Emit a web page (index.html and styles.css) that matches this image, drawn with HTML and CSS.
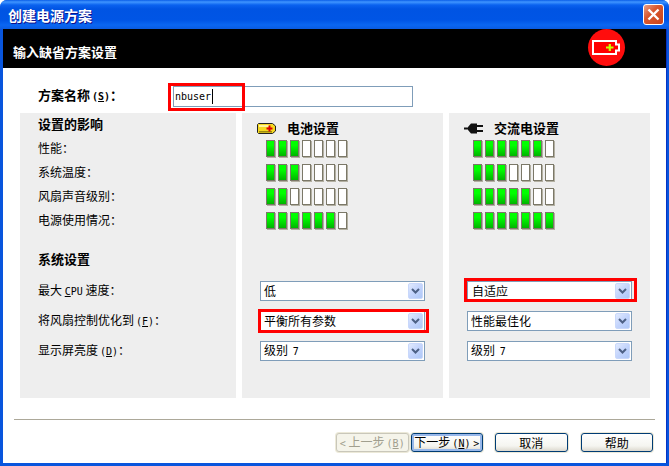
FILE: index.html
```html
<!DOCTYPE html>
<html lang="zh-CN">
<head>
<meta charset="utf-8">
<title>创建电源方案</title>
<link rel="stylesheet" href="styles.css">
</head>
<body>
<div class="window">
  <div class="titlebar">
    <span class="title">创建电源方案</span>
    <div class="close"><svg width="13" height="13" viewBox="0 0 13 13"><path d="M1.5 1.5L11.5 11.5M11.5 1.5L1.5 11.5" stroke="#fff" stroke-width="2.4" fill="none"/></svg></div>
  </div>
  <div class="client">
    <div class="banner">
      <span class="banner-text">输入缺省方案设置</span>
      <div class="badge">
        <svg width="29" height="17" viewBox="0 0 29 17">
          <path d="M1 2H24V5.5H27V11.5H24V15H1Z" fill="#ff0000" stroke="#fff" stroke-width="2"/>
          <path d="M14 8.5H21.5M17.8 5V12" stroke="#c8ff00" stroke-width="2.2" fill="none"/>
        </svg>
      </div>
    </div>
    <div class="name-row">
      <span class="name-label">方案名称<span class="lat mn">(<u>S</u>)</span><span class="colon">：</span></span>
      <div class="input"><span class="lat">nbuser</span><i class="caret"></i><b class="hl hl-input"></b></div>
    </div>
    <div class="panels">
      <section class="panel panel-labels">
        <h3 class="impact-title">设置的影响</h3>
        <div class="row-m">性能<span class="colon">：</span></div>
        <div class="row-m">系统温度<span class="colon">：</span></div>
        <div class="row-m">风扇声音级别<span class="colon">：</span></div>
        <div class="row-m">电源使用情况<span class="colon">：</span></div>
        <h3 class="system-title">系统设置</h3>
        <div class="row-s">最大 <span class="lat"><u>C</u>PU</span> 速度<span class="colon">：</span></div>
        <div class="row-s">将风扇控制优化到<span class="lat mn">(<u>F</u>)</span><span class="colon">：</span></div>
        <div class="row-s">显示屏亮度<span class="lat mn">(<u>D</u>)</span><span class="colon">：</span></div>
      </section>
      <section class="panel panel-col">
        <div class="col-head">
          <svg class="col-icon" width="20" height="11" viewBox="0 0 20 11">
            <path d="M1.5 .5H15.5L18.5 3V8L15.5 10.5H1.5L.5 9.5V1.5Z" fill="#f5d820" stroke="#222"/>
            <path d="M2 2H12V4H2Z" fill="#fff59a"/>
            <path d="M2 8H15V9.500H2Z" fill="#9a8a10"/>
            <path d="M9.500 5.500H15.500M12.500 2.500V8.500" stroke="#e00000" stroke-width="2" fill="none"/>
          </svg>
          <span>电池设置</span>
        </div>
        <div class="meter"><i class="on"></i><i class="on"></i><i class="on"></i><i></i><i></i><i></i><i></i></div>
        <div class="meter"><i class="on"></i><i class="on"></i><i class="on"></i><i></i><i></i><i></i><i></i></div>
        <div class="meter"><i class="on"></i><i class="on"></i><i></i><i></i><i></i><i></i><i></i></div>
        <div class="meter"><i class="on"></i><i class="on"></i><i class="on"></i><i class="on"></i><i class="on"></i><i class="on"></i><i></i></div>
        <div class="col-gap"></div>
        <div class="row-s"><div class="select"><span>低</span><span class="arrow"><svg width="9" height="6" viewBox="0 0 9 6"><path d="M1 1L4.500 4.500L8 1" stroke="#4d6185" stroke-width="2" fill="none"/></svg></span></div></div>
        <div class="row-s"><div class="select"><span>平衡所有参数</span><span class="arrow"><svg width="9" height="6" viewBox="0 0 9 6"><path d="M1 1L4.500 4.500L8 1" stroke="#4d6185" stroke-width="2" fill="none"/></svg></span><b class="hl hl-mid"></b></div></div>
        <div class="row-s"><div class="select"><span>级别 <span class="lat mn">7</span></span><span class="arrow"><svg width="9" height="6" viewBox="0 0 9 6"><path d="M1 1L4.500 4.500L8 1" stroke="#4d6185" stroke-width="2" fill="none"/></svg></span></div></div>
      </section>
      <section class="panel panel-col">
        <div class="col-head">
          <svg class="col-icon" width="20" height="11" viewBox="0 0 20 11">
            <path d="M0 5.500H6" stroke="#111" stroke-width="2"/>
            <path d="M4 4L7 .5H13V10.500H7L4 7Z" fill="#111"/>
            <path d="M12 3H19M12 8H19" stroke="#111" stroke-width="2"/>
          </svg>
          <span>交流电设置</span>
        </div>
        <div class="meter"><i class="on"></i><i class="on"></i><i class="on"></i><i class="on"></i><i class="on"></i><i class="on"></i><i></i></div>
        <div class="meter"><i class="on"></i><i class="on"></i><i class="on"></i><i></i><i></i><i></i><i></i></div>
        <div class="meter"><i class="on"></i><i class="on"></i><i class="on"></i><i class="on"></i><i class="on"></i><i></i><i></i></div>
        <div class="meter"><i class="on"></i><i class="on"></i><i class="on"></i><i class="on"></i><i class="on"></i><i class="on"></i><i class="on"></i></div>
        <div class="col-gap"></div>
        <div class="row-s"><div class="select"><span class="indent">自适应</span><span class="arrow"><svg width="9" height="6" viewBox="0 0 9 6"><path d="M1 1L4.500 4.500L8 1" stroke="#4d6185" stroke-width="2" fill="none"/></svg></span><b class="hl hl-right"></b></div></div>
        <div class="row-s"><div class="select"><span>性能最佳化</span><span class="arrow"><svg width="9" height="6" viewBox="0 0 9 6"><path d="M1 1L4.500 4.500L8 1" stroke="#4d6185" stroke-width="2" fill="none"/></svg></span></div></div>
        <div class="row-s"><div class="select"><span>级别 <span class="lat mn">7</span></span><span class="arrow"><svg width="9" height="6" viewBox="0 0 9 6"><path d="M1 1L4.500 4.500L8 1" stroke="#4d6185" stroke-width="2" fill="none"/></svg></span></div></div>
      </section>
    </div>
    <hr class="divider">
    <div class="footer">
      <div class="btn btn-disabled"><span><span class="lat">&lt;</span> 上一步<span class="lat mn">(<u>B</u>)</span></span></div>
      <div class="btn btn-default"><span>下一步<span class="lat mn">(<u>N</u>)</span> <span class="lat">&gt;</span></span></div>
      <div class="btn btn-cancel">取消</div>
      <div class="btn">帮助</div>
    </div>
  </div>
</div>
</body>
</html>
```
FILE: styles.css
```css
* { box-sizing: border-box; }
html, body { margin: 0; padding: 0; background: #fff; }
body { width: 669px; height: 466px; overflow: hidden; font-family: "Noto Sans CJK SC", "Liberation Sans", sans-serif; font-size: 12px; color: #000; }
.lat { font-family: "DejaVu Sans Mono", "Liberation Mono", monospace; font-size: 10px; }
.mn { margin-left: 2px; }
.colon { font-family: "Noto Sans CJK TC", "Noto Sans CJK SC", sans-serif; }
.window { width: 669px; height: 466px; display: flex; flex-direction: column; background: #0855dd; border-radius: 7px 7px 0 0; overflow: hidden; }
.titlebar { height: 29px; flex: none; display: flex; align-items: center; justify-content: space-between; padding: 0 5px 0 8px; background: linear-gradient(180deg, #0a5ee8 0, #3f95ff 2px, #0a62ef 5px, #0054e3 9px, #0055e5 20px, #0a66f2 25px, #0a5be0 29px); }
.title { color: #fff; font-size: 14px; font-weight: 700; line-height: 20px; text-shadow: 1px 1px 0 #0f1089; }
.close { width: 21px; height: 21px; display: flex; align-items: center; justify-content: center; border: 1px solid #fff; border-radius: 3px; background: linear-gradient(135deg, #e9a088 0, #d9582f 40%, #c8421a 100%); }
.client { flex: 1; margin: 0 3px 3px; background: #fff; display: flex; flex-direction: column; box-shadow: 1px 0 0 #0732c4; }
.banner { height: 39px; flex: none; background: #000; display: flex; align-items: flex-start; justify-content: space-between; padding: 0 41px 0 10px; }
.banner-text { color: #fff; font-size: 13px; font-weight: 700; line-height: 18px; margin-top: 14px; }
.badge { width: 37px; height: 37px; border-radius: 50%; background: #ff0d0d; display: flex; align-items: center; justify-content: center; }
.name-row { height: 45px; flex: none; display: flex; padding: 18px 0 0 35px; }
.name-label { width: 135px; font-size: 13px; font-weight: 700; line-height: 18px; }
.input { position: relative; width: 240px; height: 21px; border: 1px solid #7f9db9; background: #fff; display: flex; align-items: center; padding-left: 1px; }
.input .lat { font-size: 10px; }
.caret { display: block; width: 1px; height: 15px; background: #000; margin-left: 1px; }
.hl { position: absolute; border: 3px solid #ff0000; pointer-events: none; }
.hl-input { left: -6px; top: -4px; width: 77px; height: 28px; }
.hl-mid { left: -3px; top: -3px; right: -5px; bottom: -3px; }
.hl-right { left: -4px; top: -4px; right: -6px; bottom: -2px; }
.panels { flex: none; height: 285px; display: flex; gap: 6px; padding-left: 17px; }
.panel { background: #eeeeee; display: flex; flex-direction: column; }
.panel-labels { width: 216px; padding-left: 18px; }
.panel-col { width: 201px; }
.impact-title { margin: 0; height: 24px; font-size: 13px; font-weight: 700; line-height: 22px; }
.system-title { margin: 0; height: 45px; padding-top: 17px; font-size: 13px; font-weight: 700; line-height: 18px; }
.row-m { height: 24px; line-height: 22px; }
.row-s { height: 30px; padding-top: 3px; line-height: 18px; }
.panel-col .row-s { padding-left: 18px; }
.col-head { height: 24px; display: flex; align-items: center; padding: 4px 0 0 15px; font-size: 13px; font-weight: 700; }
.col-icon { flex: none; width: 20px; margin: 3px 10px 0 0; }
.meter { height: 24px; display: flex; gap: 3px; padding: 3px 0 0 24px; }
.meter i { display: block; width: 9px; height: 17px; border: 1px solid #7b7868; background: #fff; box-shadow: 1px 1px 0 #b3b0a2; }
.meter i.on { background: linear-gradient(180deg, #00ff00 30%, #00b400 100%); }
.col-gap { height: 45px; flex: none; }
.select { position: relative; width: 165px; height: 20px; border: 1px solid #7f9db9; background: #fff; display: flex; align-items: center; justify-content: space-between; padding: 0 1px 0 3px; line-height: 18px; }
.indent { padding-left: 1px; }
.arrow { width: 15px; height: 16px; display: flex; align-items: center; justify-content: center; border-radius: 2px; background: linear-gradient(135deg, #e1eafe 0, #c3d4fc 50%, #aec8f7 100%); border: 1px solid #c9d8fb; }
.divider { flex: none; width: 641px; height: 1px; margin: 21px 0 0 11px; border: 0; background: #aca899; }
.footer { flex: none; display: flex; align-items: flex-start; padding: 13px 0 0 333px; }
.btn { width: 73px; height: 19px; margin-right: 13px; display: flex; align-items: center; justify-content: center; border: 1px solid #003c74; border-radius: 3px; background: linear-gradient(180deg, #fff 0, #f5f5f0 70%, #dcd8ce 100%); box-shadow: 0 0 0 1px #ece9d8; font-size: 12px; line-height: 17px; white-space: pre; }
.btn-disabled { margin-right: 2px; border-color: #c9c7ba; background: #f5f4ea; color: #a19f8f; }
.btn-default { margin-right: 12px; box-shadow: 0 0 0 1px #ece9d8, inset 0 0 0 2px #98b8ea; }
```
